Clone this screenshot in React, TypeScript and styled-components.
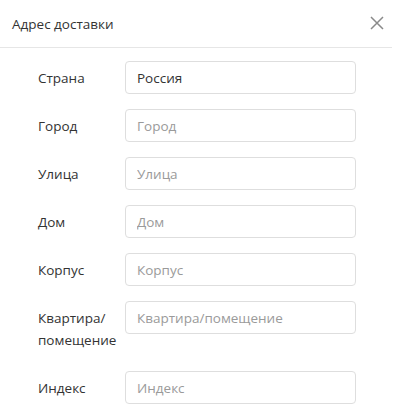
import React from "react";
import styled, { createGlobalStyle } from "styled-components";

const GlobalStyle = createGlobalStyle`
  html, body {
    margin: 0;
    padding: 0;
    background: #fff;
  }
  body {
    font-family: "Open Sans", "Noto Sans", sans-serif;
    color: #333;
  }
`;

interface Field {
  label: string;
  placeholder: string;
  value?: string;
}

const fields: Field[] = [
  { label: "Страна", placeholder: "Страна", value: "Россия" },
  { label: "Город", placeholder: "Город" },
  { label: "Улица", placeholder: "Улица" },
  { label: "Дом", placeholder: "Дом" },
  { label: "Корпус", placeholder: "Корпус" },
  { label: "Квартира/ помещение", placeholder: "Квартира/помещение" },
  { label: "Индекс", placeholder: "Индекс" },
];

const CloseIcon = () => (
  <svg width="14" height="14" viewBox="0 0 14 14">
    <path d="M1 1 L13 13 M13 1 L1 13" stroke="#8a8a8a" strokeWidth="1.5" fill="none" />
  </svg>
);

const App = (): JSX.Element => {
  return (
    <Modal>
      <GlobalStyle />
      <Header>
        <Title>Адрес доставки</Title>
        <CloseButton>
          <CloseIcon />
        </CloseButton>
      </Header>
      <Body>
        {fields.map((f) => (
          <Row key={f.label}>
            <Label>{f.label}</Label>
            <Input placeholder={f.placeholder} defaultValue={f.value} />
          </Row>
        ))}
      </Body>
    </Modal>
  );
};

const Modal = styled.div`
  width: 392px;
  height: 416px;
  background: #fff;
  overflow: hidden;
`;
const Header = styled.div`
  height: 48px;
  border-bottom: 1px solid #e6e6e6;
  display: flex;
  align-items: center;
  justify-content: space-between;
  padding: 0 8px 0 12px;
  box-sizing: border-box;
`;
const Title = styled.div`
  font-size: 13.5px;
  color: #333;
`;
const CloseButton = styled.div`
  width: 14px;
  height: 14px;
  display: flex;
  margin-top: -2px;
`;
const Body = styled.div`
  padding: 13px 0 0 38px;
`;
const Row = styled.div`
  display: flex;
  align-items: flex-start;
  margin-bottom: 15px;
`;
const Label = styled.div`
  width: 80px;
  padding: 6px 7px 5px 0;
  font-size: 13.5px;
  line-height: 22px;
  color: #333;
`;
const Input = styled.input`
  width: 231px;
  height: 33px;
  box-sizing: border-box;
  border: 1px solid #dedede;
  border-radius: 4px;
  padding: 0 11px;
  font-family: "Open Sans", "Noto Sans", sans-serif;
  font-size: 13.5px;
  color: #333;
  outline: none;
  &::placeholder {
    color: #9a9a9a;
  }
`;

export default App;
